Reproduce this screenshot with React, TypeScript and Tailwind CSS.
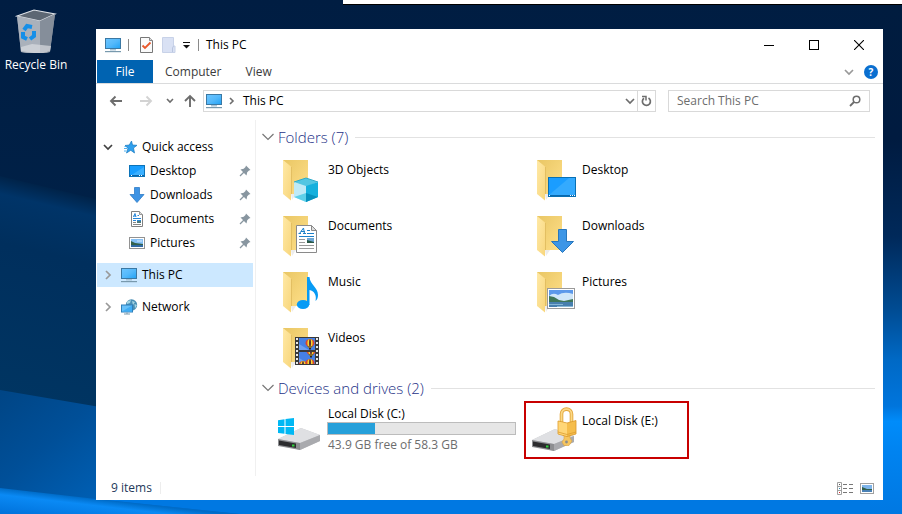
import React from "react";

type IconProps = { className?: string };

function Wallpaper() {
  return (
    <svg
      className="absolute inset-0 h-full w-full"
      viewBox="0 0 902 514"
      preserveAspectRatio="none"
      aria-hidden="true"
    >
      <defs>
        <linearGradient id="wpTop" x1="0" y1="0" x2="0" y2="1">
          <stop offset="0" stopColor="#001d42" />
          <stop offset="1" stopColor="#00264f" />
        </linearGradient>
        <linearGradient id="wpMid" x1="0" y1="176" x2="-50" y2="386" gradientUnits="userSpaceOnUse">
          <stop offset="0" stopColor="#002349" />
          <stop offset="0.08" stopColor="#003468" />
          <stop offset="0.3" stopColor="#002f5d" />
          <stop offset="1" stopColor="#003562" />
        </linearGradient>
        <linearGradient id="wpLow" x1="0" y1="390" x2="90" y2="500" gradientUnits="userSpaceOnUse">
          <stop offset="0" stopColor="#004585" />
          <stop offset="0.5" stopColor="#004f98" />
          <stop offset="1" stopColor="#005eb2" />
        </linearGradient>
        <linearGradient id="wpGlow" x1="0" y1="488" x2="-3" y2="514" gradientUnits="userSpaceOnUse">
          <stop offset="0" stopColor="#006cc8" />
          <stop offset="0.25" stopColor="#0a8af5" />
          <stop offset="1" stopColor="#0071da" />
        </linearGradient>
        <linearGradient id="wpRight" x1="0" y1="0" x2="0" y2="514" gradientUnits="userSpaceOnUse">
          <stop offset="0" stopColor="#001c3f" />
          <stop offset="0.27" stopColor="#001b40" />
          <stop offset="0.46" stopColor="#00295a" />
          <stop offset="0.6" stopColor="#004b92" />
          <stop offset="0.7" stopColor="#0069c5" />
          <stop offset="0.79" stopColor="#0075dc" />
          <stop offset="0.82" stopColor="#008cfa" />
          <stop offset="0.88" stopColor="#0083f0" />
          <stop offset="1" stopColor="#0078e2" />
        </linearGradient>
      </defs>
      <rect width="902" height="514" fill="url(#wpTop)" />
      <path d="M0 176 L100 200 L450 300 V514 H0Z" fill="url(#wpMid)" />
      <path d="M0 390 L100 407 L450 460 V514 H0Z" fill="url(#wpLow)" />
      <path d="M0 488 L96 499 L240 514 H0Z" fill="url(#wpGlow)" />
      <path d="M96 499 L902 490 V514 H240Z" fill="#0078e2" />
      <rect x="870" width="32" height="514" fill="url(#wpRight)" />
    </svg>
  );
}

function RecycleBinIcon() {
  return (
    <svg width="48" height="48" viewBox="0 0 48 48" aria-hidden="true">
      <path d="M5 11 L28 15 L43 9 L38 47 L28 50 L9 47Z" fill="#8f98a4" />
      <path d="M5 11 L22 5 L43 9 L28 16Z" fill="#5d6773" stroke="#dfe3e8" strokeWidth="1.2" />
      <path d="M5 11 L28 16 L28 50 L9 47Z" fill="#aab1bb" />
      <path d="M28 16 L43 9 L38 46 L28 50Z" fill="#858e9a" />
      <path d="M9 42 L20 39 L39 41 L38 46 L28 49 L9 46Z" fill="#d9dbdf" opacity=".7" />
      <g fill="none" stroke="#168fe8" strokeWidth="4">
        <path d="M12 25 L15 21 L20 22" />
        <path d="M22 26 L22 31 L18 34" />
        <path d="M15 34 L11 32 L11 27" />
      </g>
    </svg>
  );
}

function PcIcon({ className }: IconProps) {
  return (
    <svg width="17" height="16" viewBox="0 0 17 16" className={className} aria-hidden="true">
      <defs>
        <linearGradient id="pcScreen" x1="0" y1="0" x2="1" y2="1">
          <stop offset="0" stopColor="#6cc5ff" />
          <stop offset=".5" stopColor="#55b9fb" />
          <stop offset="1" stopColor="#20a2f5" />
        </linearGradient>
      </defs>
      <rect x=".5" y="1.5" width="15" height="10" fill="url(#pcScreen)" stroke="#3b78a3" />
      <rect x="5" y="12" width="6" height="1.5" fill="#a9c4d6" />
      <rect x="0" y="14" width="16" height="1.2" fill="#7899ad" />
    </svg>
  );
}

function PropertiesIcon() {
  return (
    <svg width="13" height="16" viewBox="0 0 13 16" aria-hidden="true">
      <path d="M.5 .5 H9.5 L12.5 3.5 V15.5 H.5Z" fill="#fafafa" stroke="#777" />
      <path d="M9.5 .5 V3.5 H12.5" fill="#ddd" stroke="#888" />
      <path d="M2.5 8.5 L5 11 L10.5 5.5" fill="none" stroke="#e9582b" strokeWidth="1.8" />
    </svg>
  );
}

function NewFolderIcon() {
  return (
    <svg width="14" height="16" viewBox="0 0 14 16" aria-hidden="true">
      <path d="M.5 .5 H11.5 V9 H13 V15.5 H.5Z" fill="#d9e1f4" stroke="#c8d2e8" />
      <path d="M11.5 9 L10.5 11 V15" fill="none" stroke="#b9c5df" />
    </svg>
  );
}

function Chevron({ dir, className }: { dir: "down" | "right"; className?: string }) {
  return (
    <svg width="10" height="10" viewBox="0 0 10 10" className={className} aria-hidden="true">
      <path
        d={dir === "down" ? "M1 3 L5 7 L9 3" : "M3 1 L7 5 L3 9"}
        fill="none"
        stroke="currentColor"
        strokeWidth="1.7"
      />
    </svg>
  );
}

function ArrowIcon({ dir }: { dir: "left" | "right" | "up" }) {
  const d = {
    left: "M13 7 H2 M6.5 2.5 L2 7 L6.5 11.5",
    right: "M1 7 H12 M7.5 2.5 L12 7 L7.5 11.5",
    up: "M7 13 V2 M2 7 L7 2 L12 7",
  }[dir];
  return (
    <svg width="14" height="14" viewBox="0 0 14 14" aria-hidden="true">
      <path d={d} fill="none" stroke="currentColor" strokeWidth="1.9" />
    </svg>
  );
}

function StarIcon() {
  return (
    <svg width="17" height="16" viewBox="0 0 17 16" aria-hidden="true">
      <path
        d="M10.5 2 L11.5 6 L16 6.3 L12.5 9 L13.5 14 L9.8 11.3 L5.5 14 L7 9.2 L4 6.5 L8.3 6Z"
        fill="#2fa0ee"
        stroke="#1779be"
        strokeWidth=".7"
      />
      <path d="M3 9.5 H6 M3 12 H5.5 M3.5 7.5 H5" stroke="#4fb0ef" strokeWidth="1" />
    </svg>
  );
}

function MiniDesktopIcon() {
  return (
    <svg width="16" height="16" viewBox="0 0 16 16" aria-hidden="true">
      <rect x=".5" y="2.5" width="15" height="11" fill="#189eff" stroke="#0c73b8" />
      <path d="M1 13 L15 4 V13Z" fill="#3bb0ff" />
      <path d="M1 12.5 H15" stroke="#0a65a8" />
      <path d="M2 12.5 H3 M10 12.5 H11 M12 12.5 H13" stroke="#fff" />
    </svg>
  );
}

function MiniDownloadIcon() {
  return (
    <svg width="16" height="16" viewBox="0 0 16 16" aria-hidden="true">
      <path d="M5.5 .5 H10.5 V7.5 H15 L8 15.5 L1 7.5 H5.5Z" fill="#3d93e4" stroke="#2d7cc8" strokeWidth=".8" />
    </svg>
  );
}

function MiniDocumentIcon() {
  return (
    <svg width="16" height="16" viewBox="0 0 16 16" aria-hidden="true">
      <path d="M2.5 .5 H10.5 L13.5 3.5 V15.5 H2.5Z" fill="#fff" stroke="#808080" />
      <path d="M10.5 .5 V3.5 H13.5" fill="#ddd" stroke="#999" />
      <path d="M4.5 6 L6 2.5 L7 6 M4.5 5 H7 M8.5 4.5 H10" stroke="#2686d9" fill="none" />
      <path d="M4 7.5 H12 M4 9.5 H7 M8 9.5 H12" stroke="#2686d9" />
      <rect x="8" y="10" width="4" height="2" fill="#4c7b7f" />
      <path d="M4 11.5 H7 M4 13.5 H12" stroke="#888" />
    </svg>
  );
}

function MiniPictureIcon() {
  return (
    <svg width="16" height="16" viewBox="0 0 16 16" aria-hidden="true">
      <rect x=".5" y="2.5" width="15" height="11" fill="#fff" stroke="#929292" />
      <rect x="2" y="4" width="12" height="8" fill="#85c0f5" />
      <path d="M2 6 L6 8 L14 9 V10 H2Z" fill="#33614b" />
      <path d="M2 10 H14 V12 H2Z" fill="#316aa3" />
      <path d="M8 6 H13" stroke="#d7ebfd" />
    </svg>
  );
}

function NetworkIcon() {
  return (
    <svg width="17" height="16" viewBox="0 0 17 16" aria-hidden="true">
      <circle cx="10.5" cy="6" r="5.7" fill="#4a8fb5" />
      <path d="M6 2.5 L10 1 L9 4 L6 5Z M11 2 L14 3 L12 6Z M13.5 5 L16 6 L14 9.5Z" fill="#a4d5e4" />
      <rect x=".5" y="6" width="11" height="7" fill="#67c1fa" stroke="#2e7fba" />
      <path d="M1 12.5 L11 6.5 V12.5Z" fill="#3fadf5" />
      <path d="M6 13.5 V15 M3 15 H9" stroke="#7899ad" />
    </svg>
  );
}

function PinIcon() {
  return (
    <svg width="12" height="12" viewBox="0 0 12 12" className="text-[#8896a0]" aria-hidden="true">
      <path d="M7 .5 L11.5 5 L10 5.5 L8.2 7.3 L7.5 10.5 L1.5 4.5 L4.7 3.8 L6.5 2Z" fill="currentColor" />
      <path d="M5 7 L1 11" stroke="currentColor" strokeWidth="1.2" />
    </svg>
  );
}

function FolderBase({ children }: { children: React.ReactNode }) {
  return (
    <svg width="48" height="48" viewBox="0 0 48 48" className="shrink-0" aria-hidden="true">
      <defs>
        <linearGradient id="folderBack" x1="0" y1="0" x2="1" y2="1">
          <stop offset="0" stopColor="#e9c664" />
          <stop offset="1" stopColor="#ffe08a" />
        </linearGradient>
        <linearGradient id="folderFlap" x1="0" y1="0" x2="1" y2="1">
          <stop offset="0" stopColor="#ffe9a6" />
          <stop offset="1" stopColor="#f8d67c" />
        </linearGradient>
      </defs>
      <path d="M7 4 H32 V38 H7Z" fill="url(#folderBack)" />
      <path d="M15 38 L20 38 L16 44Z" fill="#ececec" />
      <path d="M7 4 L15 10.5 V44.5 L7 38Z" fill="url(#folderFlap)" />
      <path d="M15.5 11 V38" stroke="#e3bf62" />
      {children}
    </svg>
  );
}

function CubeFolder() {
  return (
    <FolderBase>
      <path d="M18 26 L30 22 L42 26 L30 31Z" fill="#52c6e2" />
      <path d="M18 26 L30 30 V46 L18 41Z" fill="#bfeaf6" />
      <path d="M18 41 L30 37 V46Z" fill="#5ed0e9" />
      <path d="M30 30 L42 26 V41 L30 46Z" fill="#14b0dd" />
      <path d="M30 37 L42 41 L30 46Z" fill="#0691bd" />
      <path d="M18 26 L30 22 L42 26" fill="none" stroke="#2eabc9" />
    </FolderBase>
  );
}

function DesktopFolder() {
  return (
    <FolderBase>
      <rect x="18.5" y="21.5" width="27" height="19" fill="#1a9dff" stroke="#0870b4" />
      <path d="M19 39 L39 22 H45 V39Z" fill="#34aafe" />
      <path d="M19 39.5 H45" stroke="#0a68ae" />
      <path d="M19 39.5 H20 M40 39.5 H41 M42 39.5 H43 M44 39.5 H45" stroke="#fff" />
    </FolderBase>
  );
}

function DocumentsFolder() {
  return (
    <FolderBase>
      <path d="M20.5 13.5 H35.5 L40.5 18.5 V40.5 H20.5Z" fill="#fff" stroke="#8a8a8a" />
      <path d="M35.5 13.5 V18.5 H40.5Z" fill="#dedede" stroke="#8a8a8a" />
      <path d="M23.5 21.5 L27.5 16 L28.5 21.5 M25 19.5 H29 M22.5 21.5 H25 M27 21.5 H30" fill="none" stroke="#1c80c9" />
      <path d="M31 18.5 H34 M31 21.5 H38" stroke="#1c80c9" />
      <path d="M23 24.5 H38" stroke="#1c80c9" />
      <path d="M23 27.5 H29 M23 30.5 H29 M23 33.5 H38 M23 36.5 H38" stroke="#999" />
      <rect x="31" y="26" width="7" height="5" fill="#6fa7d4" />
      <path d="M31 28 L38 30 V31 H31Z" fill="#295846" />
    </FolderBase>
  );
}

function DownloadsFolder() {
  return (
    <FolderBase>
      <path d="M28.5 17.5 H36.5 V29.5 H43.5 L32.5 40.5 L21.5 29.5 H28.5Z" fill="#3d96e6" stroke="#2877bd" />
    </FolderBase>
  );
}

function MusicFolder() {
  return (
    <FolderBase>
      <ellipse cx="27" cy="36.5" rx="6.2" ry="4.6" fill="#079bf5" />
      <path
        d="M31 37 V9 H33.5 C34 17 42 19 42 27 C42 30 41 32 39.5 33 C41 27 38 23 33.5 22 V37Z"
        fill="#079bf5"
      />
    </FolderBase>
  );
}

function PicturesFolder() {
  return (
    <FolderBase>
      <rect x="17.5" y="20.5" width="27" height="20" fill="#fff" stroke="#9a9a9a" />
      <rect x="19" y="22" width="24" height="17" fill="#5b98ea" />
      <path d="M19 28 Q23 24 28 27 Q34 23 43 26 V34 H19Z" fill="#cfe6f9" />
      <path d="M19 28 L24 29 L29 32 L34 33 L43 31 V35 H19Z" fill="#3f7658" />
      <path d="M19 34 H43 V39 H19Z" fill="#477fae" />
      <path d="M19 36.5 H33 M27 38.5 H43" stroke="#86b6d6" />
    </FolderBase>
  );
}

function Balloon({ x, y }: { x: number; y: number }) {
  return (
    <g>
      <ellipse cx={x} cy={y} rx="4.5" ry="4" fill="#d9432b" />
      <ellipse cx={x} cy={y} rx="2.6" ry="4" fill="#f2d630" />
      <ellipse cx={x} cy={y} rx="1" ry="4" fill="#5a2b35" />
      <path d={`M${x - 3} ${y + 3} H${x + 3} L${x + 1} ${y + 5} H${x - 1}Z`} fill="#8a6a22" />
      <rect x={x - 1} y={y + 5} width="2" height="1.5" fill="#33281c" />
    </g>
  );
}

function VideosFolder() {
  return (
    <FolderBase>
      <defs>
        <clipPath id="frameTop">
          <rect x="23" y="14" width="16" height="12" />
        </clipPath>
        <clipPath id="frameBottom">
          <rect x="23" y="28" width="16" height="12" />
        </clipPath>
      </defs>
      <rect x="19" y="13" width="24" height="28" fill="#3a3a3a" />
      <g clipPath="url(#frameTop)">
        <rect x="23" y="14" width="16" height="12" fill="#4680e4" />
        <path d="M23 20 L33 26 H23Z" fill="#6f9fee" />
        <Balloon x={34} y={19} />
      </g>
      <g clipPath="url(#frameBottom)">
        <rect x="23" y="28" width="16" height="12" fill="#4680e4" />
        <path d="M23 34 L33 40 H23Z" fill="#6f9fee" />
        <Balloon x={35} y={27} />
        <Balloon x={34} y={39} />
        <Balloon x={27} y={41} />
      </g>
      <path d="M21 14 V41 M41 14 V41" stroke="#e9e9e9" strokeWidth="2" strokeDasharray="2 2" />
    </FolderBase>
  );
}

function DriveBody() {
  return (
    <g>
      <path d="M2 33 L25 22 L44 29 V35 L24 44 L2 38Z" fill="#c6c7ca" />
      <path d="M2 33 L25 22 L44 29 L24 37Z" fill="#dfe0e3" />
      <path d="M24 37 L44 29 V35 L24 44Z" fill="#a9aaae" />
      <path d="M2 33 L24 37 V44 L2 40Z" fill="#8d8e91" />
      <path d="M3 34.5 L20 37.5 V42 L3 39Z" fill="#2c2c2e" />
      <rect x="16" y="38.5" width="2.5" height="2" fill="#2fd13c" />
    </g>
  );
}

function SystemDriveIcon() {
  return (
    <svg width="48" height="48" viewBox="0 0 48 48" className="shrink-0" aria-hidden="true">
      <DriveBody />
      <path d="M2 14.3 L8.5 13.3 V20 H2Z M9.5 13.1 L18 12 V20 H9.5Z M2 21 H8.5 V27.8 L2 26.9Z M9.5 21 H18 V29 L9.5 28Z" fill="#00b8f4" />
    </svg>
  );
}

function LockedDriveIcon() {
  return (
    <svg width="48" height="48" viewBox="0 0 48 48" className="shrink-0" aria-hidden="true">
      <DriveBody />
      <path d="M31.5 17 V7 C31.5 .5 41.5 .5 41.5 7 V17" fill="none" stroke="#e3a53a" strokeWidth="3.6" />
      <path d="M31.5 17 V7 C31.5 .5 41.5 .5 41.5 7 V17" fill="none" stroke="#fbd987" strokeWidth="1.8" />
      <path d="M34 28 H40 V31 L42 34 L39 38.5 H34 L32 35 L34 32Z" fill="#f6c55f" stroke="#dca240" strokeWidth=".6" />
      <path d="M28 14 L37 16 L46 13.5 V27 L37 29.5 L28 27Z" fill="#f5bd4b" stroke="#d99729" strokeWidth=".8" />
      <path d="M28.5 14.5 L37 16.5 V29 L28.5 26.8Z" fill="#ffd677" />
      <path d="M28 25 L37 27.5 L46 25" fill="none" stroke="#dc9c30" strokeWidth=".8" />
      <circle cx="36.5" cy="35" r="1.4" fill="#8c8c8c" />
    </svg>
  );
}

const quickAccess = [
  { label: "Desktop", icon: <MiniDesktopIcon /> },
  { label: "Downloads", icon: <MiniDownloadIcon /> },
  { label: "Documents", icon: <MiniDocumentIcon /> },
  { label: "Pictures", icon: <MiniPictureIcon /> },
];

const folders = [
  { label: "3D Objects", icon: <CubeFolder /> },
  { label: "Desktop", icon: <DesktopFolder /> },
  { label: "Documents", icon: <DocumentsFolder /> },
  { label: "Downloads", icon: <DownloadsFolder /> },
  { label: "Music", icon: <MusicFolder /> },
  { label: "Pictures", icon: <PicturesFolder /> },
  { label: "Videos", icon: <VideosFolder /> },
];

function TitleBar() {
  return (
    <header className="flex h-[31px] items-center pl-[9px] pr-0.5">
      <PcIcon />
      <span className="ml-1.5 h-3 w-px bg-[#8a8a8a]" />
      <button type="button" aria-label="Properties" className="ml-[11px]">
        <PropertiesIcon />
      </button>
      <button type="button" aria-label="New folder" className="ml-[9px]">
        <NewFolderIcon />
      </button>
      <button type="button" aria-label="Customize Quick Access Toolbar" className="ml-[7px]">
        <svg width="7" height="8" viewBox="0 0 7 8" aria-hidden="true">
          <path d="M0 1.5 H7" stroke="#111" />
          <path d="M0 4 H7 L3.5 7.5Z" fill="#111" />
        </svg>
      </button>
      <span className="ml-2 h-3 w-px bg-[#8a8a8a]" />
      <h1 className="ml-[7px] grow text-xs">This PC</h1>
      <button type="button" aria-label="Minimize" className="flex h-full w-[45px] items-center justify-center">
        <svg width="10" height="10" viewBox="0 0 10 10" aria-hidden="true">
          <path d="M0 5.5 H10" stroke="#000" />
        </svg>
      </button>
      <button type="button" aria-label="Maximize" className="flex h-full w-[45px] items-center justify-center">
        <svg width="10" height="10" viewBox="0 0 10 10" aria-hidden="true">
          <rect x=".5" y=".5" width="9" height="9" fill="none" stroke="#000" />
        </svg>
      </button>
      <button type="button" aria-label="Close" className="flex h-full w-[45px] items-center justify-center">
        <svg width="10" height="10" viewBox="0 0 10 10" aria-hidden="true">
          <path d="M0 0 L10 10 M10 0 L0 10" stroke="#000" strokeWidth="1.1" />
        </svg>
      </button>
    </header>
  );
}

function RibbonTabs() {
  return (
    <div className="flex h-6 items-stretch border-b border-[#dadbdc] pl-px pr-[5px] text-[#3b3b3b]">
      <button type="button" className="w-14 bg-[#0063b1] text-white">File</button>
      <button type="button" className="px-3">Computer</button>
      <button type="button" className="px-3">View</button>
      <span className="grow" />
      <button type="button" aria-label="Expand the Ribbon" className="text-[#999]">
        <Chevron dir="down" />
      </button>
      <button type="button" aria-label="Help" className="ml-2.5 flex items-center">
        <span className="flex size-[14px] items-center justify-center rounded-full bg-[#0a6fd0] text-[10px] leading-none font-bold text-white">
          ?
        </span>
      </button>
    </div>
  );
}

function AddressRow() {
  return (
    <div className="flex h-9 items-center pr-[13px] pb-0.5 pl-[13px] text-[#6d6d6d]">
      <button type="button" aria-label="Back">
        <ArrowIcon dir="left" />
      </button>
      <button type="button" aria-label="Forward" className="ml-4 text-[#d3d3d3]">
        <ArrowIcon dir="right" />
      </button>
      <button type="button" aria-label="Recent locations" className="ml-3">
        <svg width="10" height="10" viewBox="0 0 10 10" aria-hidden="true">
          <path d="M2 3 L5 6 L8 3" fill="none" stroke="currentColor" strokeWidth="1.6" />
        </svg>
      </button>
      <button type="button" aria-label="Up" className="ml-2">
        <ArrowIcon dir="up" />
      </button>
      <div className="ml-1.5 flex h-[22px] grow items-stretch border border-[#d9d9d9]">
        <div className="flex grow items-center pl-0.5">
          <PcIcon />
          <svg width="10" height="10" viewBox="0 0 10 10" className="ml-1" aria-hidden="true">
            <path d="M3 2 L6 5 L3 8" fill="none" stroke="currentColor" strokeWidth="1.6" />
          </svg>
          <button type="button" className="ml-1.5 text-black">This PC</button>
        </div>
        <button type="button" aria-label="Previous locations" className="px-0.5">
          <Chevron dir="down" />
        </button>
        <button
          type="button"
          aria-label="Refresh"
          className="flex w-[18px] items-center justify-center border-l border-[#d9d9d9]"
        >
          <svg width="11" height="12" viewBox="0 0 11 12" aria-hidden="true">
            <path d="M7.5 3 A4 4 0 1 1 3 3.2" fill="none" stroke="currentColor" strokeWidth="1.7" />
            <path d="M1 1.5 H5 V5.5" fill="none" stroke="currentColor" strokeWidth="1.5" />
          </svg>
        </button>
      </div>
      <div className="ml-3 flex h-[22px] w-[202px] items-center border border-[#d9d9d9] px-2">
        <input
          type="text"
          aria-label="Search This PC"
          placeholder="Search This PC"
          className="w-full min-w-0 grow bg-transparent text-xs outline-none placeholder:text-[#6d6d6d]"
        />
        <svg width="12" height="12" viewBox="0 0 12 12" className="shrink-0" aria-hidden="true">
          <circle cx="7.5" cy="4.5" r="3.3" fill="none" stroke="currentColor" strokeWidth="1.5" />
          <path d="M5 7 L1 11" stroke="currentColor" strokeWidth="1.8" />
        </svg>
      </div>
    </div>
  );
}

function Sidebar() {
  return (
    <nav aria-label="Navigation pane" className="w-[160px] shrink-0 border-r border-[#f0f0f0] pt-[15px] pl-px pr-0.5">
      <button type="button" className="flex h-6 w-full items-center pl-1.5">
        <Chevron dir="down" className="text-[#404040]" />
        <span className="mr-1 ml-2"><StarIcon /></span>
        Quick access
      </button>
      <ul>
        {quickAccess.map((item) => (
          <li key={item.label}>
            <button type="button" className="flex h-6 w-full items-center pr-0.5 pl-8">
              {item.icon}
              <span className="ml-[5px] grow text-left">{item.label}</span>
              <PinIcon />
            </button>
          </li>
        ))}
      </ul>
      <button type="button" className="mt-2 flex h-6 w-full items-center bg-[#cce8ff] pl-1.5">
        <Chevron dir="right" className="text-[#999]" />
        <span className="mr-1 ml-2"><PcIcon /></span>
        This PC
      </button>
      <button type="button" className="mt-2 flex h-6 w-full items-center pl-1.5">
        <Chevron dir="right" className="text-[#999]" />
        <span className="mr-1 ml-2"><NetworkIcon /></span>
        Network
      </button>
    </nav>
  );
}

function GroupHeading({ title }: { title: string }) {
  return (
    <h2 className="flex h-6 items-center pr-2 pl-1.5 text-[15px] font-light text-[#1e3287]">
      <svg width="12" height="8" viewBox="0 0 12 8" className="mr-1" aria-hidden="true">
        <path d="M.5 1 L6 6.5 L11.5 1" fill="none" stroke="#777" strokeWidth="1.2" />
      </svg>
      {title}
      <span className="ml-[7px] h-px grow bg-[#e2e2e2]" />
    </h2>
  );
}

function Content() {
  return (
    <main className="min-w-0 grow pt-[5px]">
      <section>
        <GroupHeading title="Folders (7)" />
        <ul className="grid grid-cols-[254px_254px] gap-y-2 pt-[7px] pl-3.5">
          {folders.map((folder) => (
            <li key={folder.label}>
              <button type="button" className="flex h-12 w-full items-start gap-1 pl-1.5">
                {folder.icon}
                <span className="pt-1.5">{folder.label}</span>
              </button>
            </li>
          ))}
        </ul>
      </section>
      <section className="pt-1">
        <GroupHeading title="Devices and drives (2)" />
        <ul className="grid grid-cols-[254px_254px] items-start pt-px pl-3.5">
          <li className="flex gap-[3px] pt-[5px] pr-2 pl-1.5">
            <SystemDriveIcon />
            <div className="grow">
              <div className="pl-px leading-4">Local Disk (C:)</div>
              <div
                role="meter"
                aria-label="Used space"
                aria-valuenow={25}
                aria-valuemin={0}
                aria-valuemax={100}
                className="h-[13px] border border-[#bcbcbc] bg-[#e6e6e6]"
              >
                <div className="h-full w-1/4 bg-[#26a0da]" />
              </div>
              <div className="pt-0.5 pl-px leading-4 text-[#6d6d6d]">43.9 GB free of 58.3 GB</div>
            </div>
          </li>
          <li className="flex h-[58px] w-[165px] items-start gap-1 border-2 border-[#c80000] pt-1 pl-1">
            <LockedDriveIcon />
            <span className="pt-1.5">Local Disk (E:)</span>
          </li>
        </ul>
      </section>
    </main>
  );
}

function StatusBar() {
  return (
    <footer className="flex h-6 items-center pr-2 pl-[15px] text-[#1e395b]">
      <span>9 items</span>
      <span className="ml-2 h-3 w-px bg-[#ededed]" />
      <span className="grow" />
      <button type="button" aria-label="Details view">
        <svg width="17" height="13" viewBox="0 0 17 13" aria-hidden="true">
          <path d="M.5 .5 H4.5 V12.5 H.5Z M.5 4.5 H4.5 M.5 8.5 H4.5" fill="#fff" stroke="#a0a0a0" />
          <path d="M6 2.5 H10 M12 2.5 H16 M6 6.5 H10 M12 6.5 H16 M6 10.5 H10 M12 10.5 H16" stroke="#777" />
          <path d="M2 2.5 H3" stroke="#555" />
          <path d="M2 6.5 H3" stroke="#38a" />
          <path d="M2 10.5 H3" stroke="#d22" />
        </svg>
      </button>
      <button type="button" aria-label="Large icons view" className="ml-1.5">
        <svg width="15" height="11" viewBox="0 0 15 11" aria-hidden="true">
          <rect x=".5" y=".5" width="13" height="10" fill="#fff" stroke="#a0a0a0" />
          <rect x="2" y="2" width="10" height="7" fill="#7eb4ea" />
          <path d="M2 4 L7 6 L12 6 V7 H2Z" fill="#315f4c" />
          <path d="M2 7 H12 V9 H2Z" fill="#4a81b5" />
        </svg>
      </button>
    </footer>
  );
}

export default function App() {
  return (
    <div className="relative isolate flex min-h-screen flex-col bg-[#001d42] font-['Open_Sans','Noto_Sans',sans-serif] text-xs text-black">
      <Wallpaper />
      <div className="relative ml-[343px] h-[5px] border-b border-black bg-white" />
      <div className="relative flex grow pr-[19px] pb-3.5">
        <aside className="w-24 shrink-0">
          <button type="button" className="flex w-[72px] flex-col items-center text-white">
            <RecycleBinIcon />
            <span className="pt-1 leading-4">Recycle Bin</span>
          </button>
        </aside>
        <div className="mt-6 flex min-w-0 grow flex-col bg-white">
          <TitleBar />
          <RibbonTabs />
          <AddressRow />
          <div className="flex grow">
            <Sidebar />
            <Content />
          </div>
          <StatusBar />
        </div>
      </div>
    </div>
  );
}
